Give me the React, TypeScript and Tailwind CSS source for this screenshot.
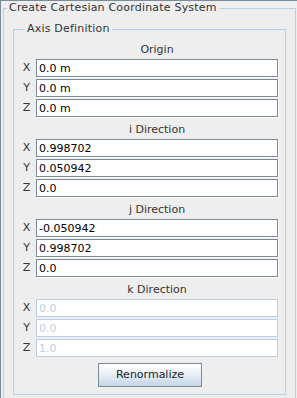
import React from "react";

type FieldProps = { label: string; value: string; disabled?: boolean };

function Field({ label, value, disabled }: FieldProps) {
  return (
    <div className="flex h-[20px] items-start">
      <span className="w-[9px] h-[18px] leading-[18px] text-center text-[#333333]">{label}</span>
      <input
        readOnly
        disabled={disabled}
        value={value}
        className={
          disabled
            ? "ml-[5px] h-[18px] min-w-0 flex-1 border border-[#b8cfe5] bg-white pl-[2px] text-[11px] leading-[16px] text-[#b8cfe5] outline-none font-['DejaVu_Sans',sans-serif]"
            : "ml-[5px] h-[18px] min-w-0 flex-1 border border-[#7a8a99] bg-white pl-[2px] text-[11px] leading-[16px] text-black outline-none shadow-[1px_1px_0_#ffffff] font-['DejaVu_Sans',sans-serif]"
        }
      />
    </div>
  );
}

function Section({
  title,
  values,
  disabled,
}: {
  title: string;
  values: [string, string, string];
  disabled?: boolean;
}) {
  return (
    <div className="flex flex-col">
      <div className="flex h-[20px] items-center justify-center pt-[3px] pl-[14px] text-[#333333]">{title}</div>
      <Field label="X" value={values[0]} disabled={disabled} />
      <Field label="Y" value={values[1]} disabled={disabled} />
      <Field label="Z" value={values[2]} disabled={disabled} />
    </div>
  );
}

export default function App() {
  return (
    <div className="w-[297px] h-[398px] overflow-hidden bg-[#eeeeee] border-t border-l border-[#7a8a99] text-[11px] font-['DejaVu_Sans',sans-serif]">
      <fieldset className="ml-[2px] mr-[1px] border border-[#b8cfe5] pb-[4px]">
        <legend className="ml-[3px] px-[2px] h-[14px] leading-[14px] tracking-[0.2px] text-[#333333]">
          Create Cartesian Coordinate System
        </legend>
        <fieldset className="mx-[9px] mt-[7px] border border-[#b8cfe5] pt-[3px] pb-[7px] pl-[8px] pr-[7px]">
          <legend className="ml-[3px] px-[2px] h-[14px] leading-[14px] tracking-[0.2px] text-[#333333]">Axis Definition</legend>
          <Section title="Origin" values={["0.0 m", "0.0 m", "0.0 m"]} />
          <Section title="i Direction" values={["0.998702", "0.050942", "0.0"]} />
          <Section title="j Direction" values={["-0.050942", "0.998702", "0.0"]} />
          <Section title="k Direction" values={["0.0", "0.0", "1.0"]} disabled />
          <div className="mt-[4px] flex justify-center">
            <button className="h-[24px] w-[104px] border border-[#7a8a99] bg-[linear-gradient(to_bottom,#ffffff_0%,#eef3f8_35%,#dbe6f1_65%,#c3d5e7_100%)] text-[11px] text-[#222222] font-['DejaVu_Sans',sans-serif]">
              Renormalize
            </button>
          </div>
        </fieldset>
      </fieldset>
    </div>
  );
}
